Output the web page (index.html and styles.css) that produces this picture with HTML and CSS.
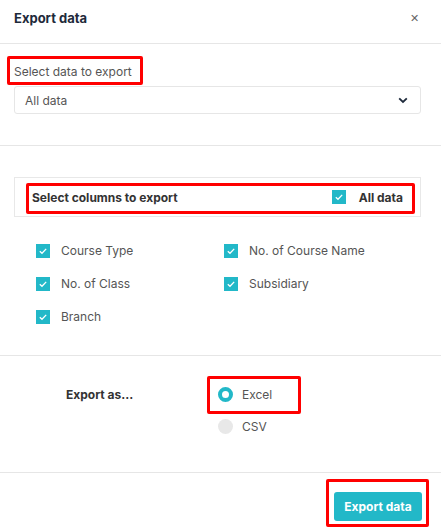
FILE: index.html
```html
<!DOCTYPE html>
<html>
<head>
<meta charset="utf-8">
<link rel="stylesheet" href="styles.css">
</head>
<body>
<div class="modal">
  <header class="header">
    <h1 class="title">Export data</h1>
    <span class="close">&#x2715;</span>
  </header>

  <section class="section sec-data">
    <label class="field-label mark mark-label">Select data to export</label>
    <div class="select">
      <span>All data</span>
      <svg class="chev" width="10" height="7" viewBox="0 0 10 7"><path d="M1.2 1.3 L5 5 L8.8 1.3" fill="none" stroke="#1e2a3b" stroke-width="1.8"/></svg>
    </div>
  </section>

  <section class="section sec-cols">
    <div class="cols-head">
      <div class="cols-inner mark mark-cols">
        <span class="bold">Select columns to export</span>
        <span class="all">
          <span class="cb"><svg viewBox="0 0 14 14" width="14" height="14"><path d="M3.8 7.2 L6 9.3 L10.2 4.9" fill="none" stroke="#fff" stroke-width="1.3"/></svg></span>
          <span class="bold">All data</span>
        </span>
      </div>
    </div>
    <div class="grid">
      <div class="item"><span class="cb"><svg viewBox="0 0 14 14" width="14" height="14"><path d="M3.8 7.2 L6 9.3 L10.2 4.9" fill="none" stroke="#fff" stroke-width="1.3"/></svg></span>Course Type</div>
      <div class="item"><span class="cb"><svg viewBox="0 0 14 14" width="14" height="14"><path d="M3.8 7.2 L6 9.3 L10.2 4.9" fill="none" stroke="#fff" stroke-width="1.3"/></svg></span>No. of Course Name</div>
      <div class="item"><span class="cb"><svg viewBox="0 0 14 14" width="14" height="14"><path d="M3.8 7.2 L6 9.3 L10.2 4.9" fill="none" stroke="#fff" stroke-width="1.3"/></svg></span>No. of Class</div>
      <div class="item"><span class="cb"><svg viewBox="0 0 14 14" width="14" height="14"><path d="M3.8 7.2 L6 9.3 L10.2 4.9" fill="none" stroke="#fff" stroke-width="1.3"/></svg></span>Subsidiary</div>
      <div class="item"><span class="cb"><svg viewBox="0 0 14 14" width="14" height="14"><path d="M3.8 7.2 L6 9.3 L10.2 4.9" fill="none" stroke="#fff" stroke-width="1.3"/></svg></span>Branch</div>
    </div>
  </section>

  <section class="section sec-format">
    <div class="format-label bold">Export as...</div>
    <div class="radios">
      <div class="radio-row mark mark-excel"><span class="radio on"></span>Excel</div>
      <div class="radio-row"><span class="radio"></span>CSV</div>
    </div>
  </section>

  <footer class="footer">
    <button class="btn mark mark-btn">Export data</button>
  </footer>
</div>
</body>
</html>
```

FILE: styles.css
```css
* { box-sizing: border-box; }
html, body { margin: 0; padding: 0; background: #fff; }
body {
  font-family: "Inter", "Open Sans", sans-serif;
  color: #555;
  font-size: 12px;
  width: 441px;
  height: 529px;
  overflow: hidden;
}
.modal { display: flex; flex-direction: column; }
.header {
  height: 44px;
  display: flex;
  align-items: flex-start;
  justify-content: space-between;
  padding: 8px 22px 0 14px;
  border-bottom: 1px solid #e6e6e6;
}
.title {
  margin: 0;
  font-size: 13px;
  line-height: 20px;
  font-weight: 700;
  color: #1e2a3b;
}
.close { font-size: 11px; line-height: 20px; color: #666; }

.section { border-bottom: 1px solid #e6e6e6; }
.sec-data {
  height: 102px;
  padding: 18px 20px 0 14px;
  display: flex;
  flex-direction: column;
}
.field-label { font-size: 12px; line-height: 20px; color: #555; align-self: flex-start; }
.mark { position: relative; }
.mark::after {
  content: "";
  position: absolute;
  border: 3px solid #f00;
  border-radius: 2px;
  pointer-events: none;
}
.mark-label::after { left: -7px; right: -11px; top: -6px; bottom: -3px; }
.select {
  margin-top: 4px;
  height: 28px;
  border: 1px solid #e6e6e6;
  border-radius: 3px;
  display: flex;
  align-items: center;
  justify-content: space-between;
  padding: 0 12px 0 10px;
  color: #555;
}
.chev { display: block; }

.sec-cols {
  height: 210px;
  padding: 31px 20px 0 14px;
}
.cols-head {
  height: 40px;
  border: 1px solid #e8e8e8;
  padding: 5px 6px 0 12px;
}
.cols-inner {
  display: flex;
  align-items: center;
  justify-content: space-between;
  height: 28px;
  padding: 0 11px 0 5px;
}
.mark-cols::after { left: -1px; right: -1px; top: 0; bottom: -3px; }
.bold { font-weight: 700; color: #333; }
.all { display: flex; align-items: center; gap: 13px; }
.cb {
  width: 14px; height: 14px;
  background: #22b8c8;
  display: inline-flex;
  flex: none;
}
.cb svg { display: block; }
.grid {
  display: grid;
  grid-template-columns: 188px 1fr;
  row-gap: 19px;
  padding: 27px 0 0 22px;
}
.item { display: flex; align-items: center; gap: 11px; height: 14px; line-height: 14px; }

.sec-format {
  height: 117px;
  display: flex;
  padding: 31px 0 0 66px;
}
.format-label { width: 152px; line-height: 18px; margin-top: -1px; }
.radios { display: flex; flex-direction: column; gap: 17px; }
.radio-row { display: flex; align-items: center; gap: 9px; height: 15px; }
.mark-excel::after { left: -11px; right: -29px; top: -11px; bottom: -12px; }
.radio {
  width: 15px; height: 15px; border-radius: 50%;
  background: #e8e8e8;
  flex: none;
}
.radio.on { background: #fff; border: 4.5px solid #22b8c8; }

.footer {
  display: flex;
  justify-content: flex-end;
  padding: 19px 19px 0 0;
}
.btn {
  height: 29px;
  width: 88px;
  border: none;
  border-radius: 3px;
  background: #22b8c8;
  color: #fff;
  font-family: inherit;
  font-size: 12px;
  font-weight: 700;
  padding: 0;
}
.mark-btn::after { left: -8px; right: -7px; top: -13px; bottom: -6px; }
```
